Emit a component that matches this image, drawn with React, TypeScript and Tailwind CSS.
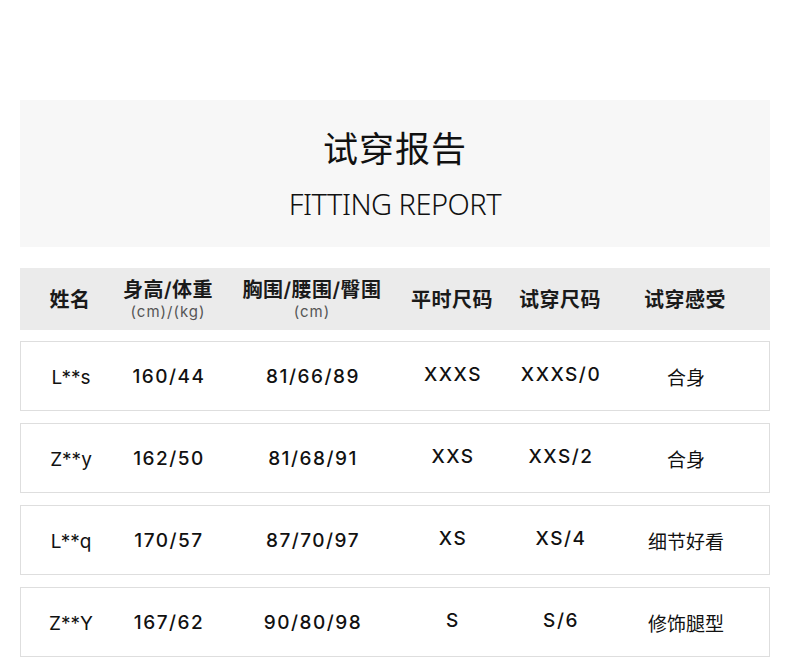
const FONT = "font-['Inter','Noto_Sans_CJK_SC',sans-serif]";

const COLS = 'grid grid-cols-[100px_96px_192px_88px_128px_122px] pr-6';

const rows = [
  { name: 'L**s', hw: '160/44', body: '81/66/89', usual: 'XXXS', tried: 'XXXS/0', feel: '合身' },
  { name: 'Z**y', hw: '162/50', body: '81/68/91', usual: 'XXS', tried: 'XXS/2', feel: '合身' },
  { name: 'L**q', hw: '170/57', body: '87/70/97', usual: 'XS', tried: 'XS/4', feel: '细节好看' },
  { name: 'Z**Y', hw: '167/62', body: '90/80/98', usual: 'S', tried: 'S/6', feel: '修饰腿型' },
];

function HeadCell({ label, sub }: { label: string; sub?: string }) {
  return (
    <div className="flex flex-col items-center justify-center pt-[2px]">
      <span className="text-[20px] font-semibold leading-[24px] tracking-[0.5px] text-[#1a1a1a]">{label}</span>
      {sub && <span className="text-[15px] leading-[20px] text-[#555] tracking-[1px]">{sub}</span>}
    </div>
  );
}

export default function App() {
  return (
    <div className={`w-[790px] h-[669px] bg-white pt-[100px] px-5 ${FONT}`}>
      <section className="h-[147px] bg-[#f7f7f7] flex flex-col items-center">
        <h1 className="mt-[25px] text-[35px] leading-[44px] text-[#111] tracking-[1px] font-['Noto_Sans_CJK_SC',sans-serif]">
          试穿报告
        </h1>
        <p className="mt-[17px] text-[29px] leading-[36px] font-light text-[#111] tracking-[-0.5px] font-['Noto_Sans',sans-serif]">
          FITTING REPORT
        </p>
      </section>

      <div className={`mt-[21px] h-[62px] bg-[#ebebeb] ${COLS}`}>
        <HeadCell label="姓名" />
        <HeadCell label="身高/体重" sub="(cm)/(kg)" />
        <HeadCell label="胸围/腰围/臀围" sub="(cm)" />
        <HeadCell label="平时尺码" />
        <HeadCell label="试穿尺码" />
        <HeadCell label="试穿感受" />
      </div>

      <div className="mt-[11px] flex flex-col gap-3">
        {rows.map((r) => (
          <div key={r.name} className={`h-[70px] bg-white border border-[#dedede] items-center text-[#111] ${COLS}`}>
            <span className="text-center text-[19px] translate-y-[2px]">{r.name}</span>
            <span className="text-center text-[19px] font-medium tracking-[1.5px] translate-y-[1px]">{r.hw}</span>
            <span className="text-center text-[19px] font-medium tracking-[1.5px] translate-y-[1px]">{r.body}</span>
            <span className="text-center text-[19px] font-medium tracking-[1.5px] -translate-y-[1px]">{r.usual}</span>
            <span className="text-center text-[19px] font-medium tracking-[1.5px] -translate-y-[1px]">{r.tried}</span>
            <span className="text-center text-[19px] translate-y-[3px]">{r.feel}</span>
          </div>
        ))}
      </div>
    </div>
  );
}
